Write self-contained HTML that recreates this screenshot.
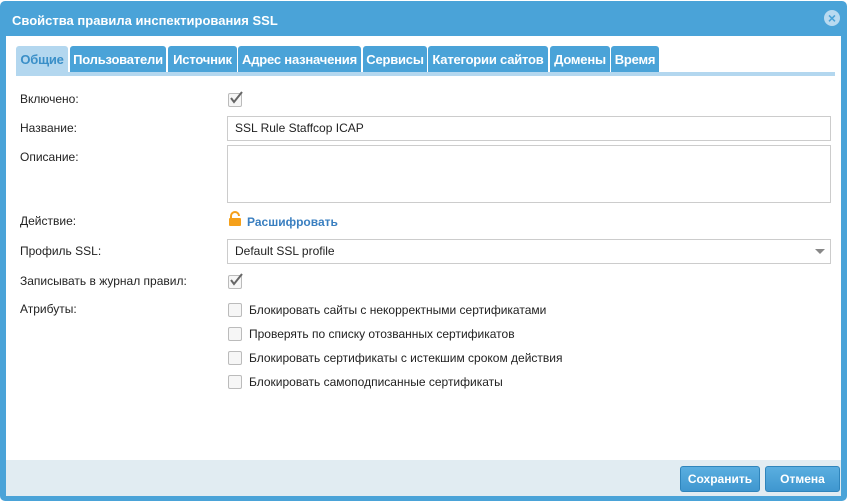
<!DOCTYPE html>
<html><head><meta charset="utf-8"><style>
body{margin:0;width:852px;height:501px;background:#fff;font-family:"Liberation Sans",sans-serif;font-size:12px;color:#222;position:relative;overflow:hidden}
.win{position:absolute;left:0;top:1px;width:847px;height:500px;background:#4aa3d8;border-radius:5px}
.hd{position:absolute;left:12px;top:13px;color:#fff;font-weight:bold;font-size:13px}
.close{position:absolute;left:824px;top:10px;width:16px;height:16px;border-radius:50%;background:#b9daf0;color:#4aa3d8;font-weight:bold;font-size:14px;line-height:16px;text-align:center}
.body{position:absolute;left:6px;top:36px;width:835px;height:424px;background:#fff}
.ft{position:absolute;left:6px;top:460px;width:835px;height:36px;background:#e1ecf2}
.tab{position:absolute;top:46px;height:26px;line-height:27px;background:#4aa3d8;color:#fff;font-weight:bold;font-size:13px;text-align:center;border-radius:3px 3px 0 0;letter-spacing:-0.2px}
.strip{position:absolute;left:16px;top:72px;width:819px;height:4px;background:#b3d7ef}
.lbl{position:absolute;left:20px}
.inp{position:absolute;left:227px;width:602px;border:1px solid #ccc;background:#fff}
.cb{position:absolute;left:228px;width:12px;height:12px;border:1px solid #bbb;border-radius:2px;background:#f6f6f6}
.ct{position:absolute;left:249px}
.btn{position:absolute;top:466px;height:24px;line-height:24px;background:linear-gradient(#5aaee0,#3f97cf);border:1px solid #2f85bc;border-radius:3px;color:#fff;font-weight:bold;text-align:center}
</style></head><body>
<div class="win"></div>
<div class="hd">Свойства правила инспектирования SSL</div>
<div class="close">×</div>
<div class="body"></div>
<div class="ft"></div>
<div class="tab" style="left:16px;width:52px;background:#b3d7ef;color:#3a8fc8">Общие</div>
<div class="tab" style="left:70px;width:96px">Пользователи</div>
<div class="tab" style="left:168px;width:69px">Источник</div>
<div class="tab" style="left:238px;width:123px">Адрес назначения</div>
<div class="tab" style="left:363px;width:64px">Сервисы</div>
<div class="tab" style="left:428px;width:120px">Категории сайтов</div>
<div class="tab" style="left:550px;width:60px">Домены</div>
<div class="tab" style="left:611px;width:48px">Время</div>
<div class="strip"></div>
<div class="lbl" style="top:92px">Включено:</div>
<div class="cb" style="top:93px"></div>
<svg style="position:absolute;left:229px;top:90px" width="14" height="14"><path d="M2 8l3 4 8-10" stroke="#666" stroke-width="2" fill="none"/></svg>
<div class="lbl" style="top:121px">Название:</div>
<div class="inp" style="top:116px;height:23px;line-height:23px;padding-left:7px;width:595px">SSL Rule Staffcop ICAP</div>
<div class="lbl" style="top:150px">Описание:</div>
<div class="inp" style="top:145px;height:56px"></div>
<div class="lbl" style="top:214px">Действие:</div>
<svg style="position:absolute;left:228px;top:211px" width="14" height="16"><path d="M3 7V5a4 4 0 0 1 8 0" stroke="#f5a01a" stroke-width="2" fill="none"/><rect x="1" y="7" width="12" height="8" rx="1" fill="#f5a01a"/></svg>
<div style="position:absolute;left:247px;top:215px;color:#3a7fc0;font-weight:bold">Расшифровать</div>
<div class="lbl" style="top:244px">Профиль SSL:</div>
<div class="inp" style="top:239px;height:23px;line-height:23px;padding-left:7px;width:595px">Default SSL profile</div>
<div style="position:absolute;left:815px;top:249px;border-left:5px solid transparent;border-right:5px solid transparent;border-top:5px solid #888"></div>
<div class="lbl" style="top:274px">Записывать в журнал правил:</div>
<div class="cb" style="top:275px"></div>
<svg style="position:absolute;left:229px;top:272px" width="14" height="14"><path d="M2 8l3 4 8-10" stroke="#666" stroke-width="2" fill="none"/></svg>
<div class="lbl" style="top:302px">Атрибуты:</div>
<div class="cb" style="top:303px"></div><div class="ct" style="top:303px">Блокировать сайты с некорректными сертификатами</div>
<div class="cb" style="top:327px"></div><div class="ct" style="top:327px">Проверять по списку отозванных сертификатов</div>
<div class="cb" style="top:351px"></div><div class="ct" style="top:351px">Блокировать сертификаты с истекшим сроком действия</div>
<div class="cb" style="top:375px"></div><div class="ct" style="top:375px">Блокировать самоподписанные сертификаты</div>
<div class="btn" style="left:680px;width:78px">Сохранить</div>
<div class="btn" style="left:765px;width:73px">Отмена</div>
</body></html>
